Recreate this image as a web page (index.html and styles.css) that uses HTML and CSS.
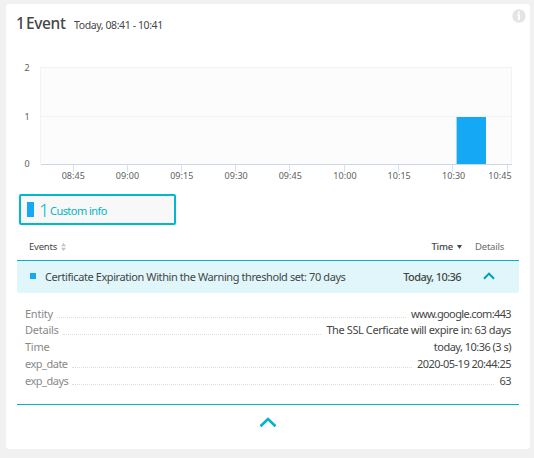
FILE: index.html
```html
<!DOCTYPE html>
<html lang="en">
<head>
<meta charset="utf-8">
<title>Events</title>
<link rel="stylesheet" href="styles.css">
</head>
<body>
<main class="card">
  <header class="head">
    <h1 class="title">1 Event</h1>
    <span class="range">Today, 08:41 - 10:41</span>
    <svg class="info" width="14" height="14" viewBox="0 0 14 14"><circle cx="7" cy="7" r="6.7" fill="#e3e4e4"/><path d="M6 2.4h2v1.800H6zM5.200 5.200H8v5.800H6V6.600h-.8z" fill="#fff"/></svg>
  </header>
  <svg class="chart" width="524" height="130" viewBox="6 56 524 130">
    <rect x="40" y="67" width="472" height="97" fill="#fcfcfc"/>
    <path d="M40 67.5H512M40 116.5H512M40.5 67V164M511.5 67V164" stroke="#f3f3f3"/>
    <path d="M73.5 164v8M127.5 164v8M181.5 164v8M235.5 164v8M289.5 164v8M344.5 164v8M398.5 164v8M452.5 164v8M507.5 164v8" stroke="#d9e1f2"/>
    <path d="M41 164.5H512" stroke="#ccd6eb"/>
    <rect x="456.6" y="117" width="29.4" height="47" fill="#14a8f5"/>
    <g class="axis">
      <text x="27" y="71">2</text><text x="27" y="119.5">1</text><text x="27" y="167">0</text>
    </g>
    <g class="axis ticks">
      <text x="73.300" y="179">08:45</text><text x="127.500" y="179">09:00</text><text x="181.800" y="179">09:15</text><text x="236.200" y="179">09:30</text><text x="290.300" y="179">09:45</text><text x="345" y="179">10:00</text><text x="399.200" y="179">10:15</text><text x="453.700" y="179">10:30</text><text x="500" y="179">10:45</text>
    </g>
  </svg>
  <div class="legend"><i class="swatch"></i><span class="count">1</span><span class="kind">Custom info</span></div>
  <section class="table">
    <div class="thead">
      <span class="th-events">Events</span>
      <svg class="sort" width="5" height="8" viewBox="0 0 5 8"><path d="M0 3.300L2.500 0 5 3.300zM0 4.700h5L2.500 8z" fill="#c4c4c4"/></svg>
      <span class="th-time">Time</span>
      <svg class="down" width="5" height="4" viewBox="0 0 5 4"><path d="M0 0h5L2.500 4z" fill="#454646"/></svg>
      <span class="th-details">Details</span>
    </div>
    <div class="row">
      <i class="dot"></i>
      <span class="name">Certificate Expiration Within the Warning threshold set: 70 days</span>
      <span class="when">Today, 10:36</span>
      <svg class="toggle" width="12" height="8" viewBox="0 0 12 8"><path d="M1 6.800L6 1.600l5 5.200" fill="none" stroke="#00a1b2" stroke-width="2"/></svg>
    </div>
    <dl class="props">
      <div class="prop"><dt>Entity</dt><i class="lead"></i><dd class="host">www.google.com:443</dd></div>
      <div class="prop"><dt>Details</dt><i class="lead"></i><dd class="message">The SSL Cerficate will expire in: 63 days</dd></div>
      <div class="prop"><dt>Time</dt><i class="lead blank"></i><dd>today, 10:36 (3 s)</dd></div>
      <div class="prop"><dt class="key">exp_date</dt><i class="lead"></i><dd>2020-05-19 20:44:25</dd></div>
      <div class="prop"><dt class="key">exp_days</dt><i class="lead"></i><dd>63</dd></div>
    </dl>
  </section>
  <footer class="foot"><svg width="18" height="11" viewBox="0 0 18 11"><path d="M1.500 9.200L9 2l7.500 7.200" fill="none" stroke="#00b4cc" stroke-width="2.600"/></svg></footer>
</main>
</body>
</html>
```
FILE: styles.css
```css
* { box-sizing: border-box; }
body { margin: 0; padding: 4px 4px 9px 6px; background: #f1f1f1; font-family: "Noto Sans", sans-serif; color: #454646; }
.card { height: 445px; background: #fff; border-radius: 3px; }
.head { display: flex; height: 52px; padding: 0 4px 0 10px; white-space: nowrap; }
.title { margin: 9px 0 0; width: 58px; font-size: 15.5px; line-height: 20px; font-weight: 500; letter-spacing: -.4px; word-spacing: -2px; }
.range { margin-top: 13px; font-size: 10.5px; line-height: 17px; letter-spacing: -.4px; }
.info { margin: 5px 0 0 auto; }
.chart { display: block; }
.axis { font-size: 9px; fill: #606060; text-anchor: middle; }
.ticks { letter-spacing: .05px; }
.legend { display: flex; align-items: center; width: 157px; height: 31px; margin: 8px 0 0 13px; padding-left: 6px; border: 2px solid #00b9cc; border-radius: 2px; background: #f8f8f8; color: #00b4c4; white-space: nowrap; }
.swatch { width: 7px; height: 15px; background: #14a8f5; }
.count { width: 11px; margin-left: 5px; font-size: 18px; line-height: 20px; font-weight: 300; }
.kind { margin: 3px 0 0; font-size: 11px; line-height: 16px; letter-spacing: -.55px; }
.table { margin: 0 11px; border-bottom: 1px solid #00b4cc; }
.thead { display: flex; align-items: center; height: 35px; padding: 8px 14px 0 12px; font-size: 9.5px; letter-spacing: -.2px; }
.sort { margin-left: 4px; }
.th-time { margin-left: auto; font-weight: 500; }
.down { margin: 1px 13px 0 4px; }
.th-details { width: 30px; color: #6b6b6b; }
.row { display: flex; align-items: center; height: 33px; padding: 0 24px 2px 13px; border-top: 1px solid #00b4cc; border-radius: 0 0 2px 2px; background: #e0f6fa; font-size: 11px; white-space: nowrap; }
.dot { width: 6px; height: 6px; background: #14a8f5; }
.name { margin-left: 9px; letter-spacing: -.41px; }
.when { margin-left: auto; font-weight: 500; letter-spacing: -.57px; }
.toggle { margin-left: 22px; }
.props { margin: 0; padding: 11.5px 8px 14px 8px; height: 111px; font-size: 11px; }
.prop { display: flex; height: 16.8px; line-height: 17px; white-space: nowrap; }
dt { color: #898989; letter-spacing: -.25px; }
.key { letter-spacing: -.5px; }
dd { margin: 0; letter-spacing: -.52px; }
.host { letter-spacing: -.63px; }
.message { letter-spacing: -.4px; }
.lead { flex: 1; height: 13.5px; margin: 0 5px 0 4px; border-bottom: 1px dotted #dcdcdc; }
.blank { border-color: transparent; }
.foot { display: flex; justify-content: center; padding: 12px 0 0; }
```
